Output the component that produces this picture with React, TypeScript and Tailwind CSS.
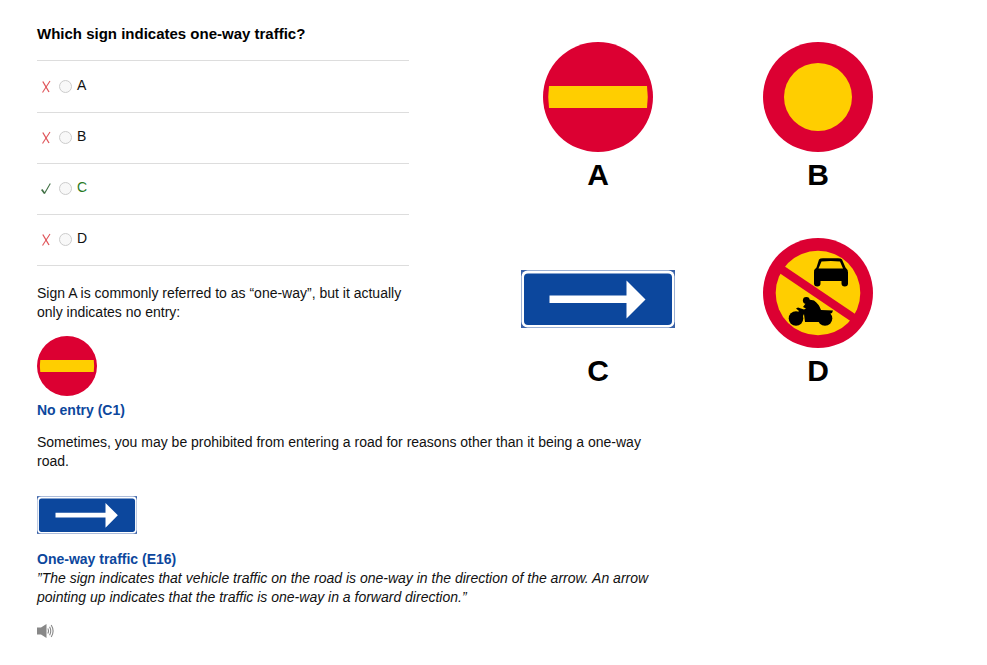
import React from "react";

type Answer = { id: string; correct: boolean };

const answers: Answer[] = [
  { id: "A", correct: false },
  { id: "B", correct: false },
  { id: "C", correct: true },
  { id: "D", correct: false },
];

function NoEntrySign({ className }: { className: string }) {
  return (
    <svg viewBox="0 0 110 110" className={className} role="img" aria-label="No entry sign">
      <circle cx="55" cy="55" r="55" fill="#dc0032" />
      <path d="M6 44H104Q105.500 55 104 66H6Q4.500 55 6 44Z" fill="#ffce00" />
    </svg>
  );
}

function ProhibitedSign() {
  return (
    <svg viewBox="0 0 110 110" className="size-[110px]" role="img" aria-label="All vehicles prohibited sign">
      <circle cx="55" cy="55" r="55" fill="#dc0032" />
      <circle cx="55" cy="55" r="34" fill="#ffce00" />
    </svg>
  );
}

function OneWaySign({ className }: { className: string }) {
  return (
    <svg viewBox="0 0 154 58" className={className} role="img" aria-label="One-way traffic sign">
      <rect width="154" height="58" fill="#3a62a8" />
      <rect x="0.500" y="0.500" width="153" height="57" rx="6" fill="#fff" />
      <rect x="3" y="3.500" width="148" height="51.500" rx="4" fill="#0c479d" />
      <path d="M28.500 25.500H105.500V10.500L124.500 29.500L105.500 48.500V33H28.500Z" fill="#fff" />
    </svg>
  );
}

function NoMotorVehiclesSign() {
  return (
    <svg viewBox="0 0 110 110" className="size-[110px]" role="img" aria-label="No motor vehicles sign">
      <circle cx="55" cy="55" r="55" fill="#dc0032" />
      <circle cx="55" cy="55" r="42.300" fill="#ffce00" />
      <path d="M15 29L95 83" stroke="#dc0032" strokeWidth="8.500" />
      <path
        fillRule="evenodd"
        d="M56 21.500Q57 20.300 60 20.300H75Q78 20.300 79 21.500L82.500 29.500Q85 31.500 85 34.500V45.500Q85 48.500 81.800 48.500T78.500 45.500V43H57.500V45.500Q57.500 48.500 54.300 48.500T51 45.500V34.500Q51 31 53.500 29.500ZM58.500 23.500L55.500 30.500H80L77 23.500Q68 22.500 58.500 23.500Z"
        fill="#000"
      />
      <circle cx="33" cy="80.500" r="7.300" fill="#000" />
      <circle cx="62" cy="80.500" r="7.300" fill="#000" />
      <circle cx="43.300" cy="62.500" r="3.400" fill="#000" />
      <path
        d="M33 70.500L35 69.500L41 71.500L43 70.500L40 69L43 65L46 61.500L51 62.500Q56 66 58 72L70 72.500L69 75L66 76L64 84H42L41 76L38 82L32 78L36 73Z"
        fill="#000"
      />
    </svg>
  );
}

function CrossMark() {
  return (
    <svg viewBox="0 0 10 13" className="h-[13px] w-[10px]" fill="none" stroke="#e0555a" role="img" aria-label="Incorrect">
      <path d="M1.800 1.500L8 12" strokeWidth="1.300" />
      <path d="M9 1L1.500 12.500" strokeWidth="1.100" />
    </svg>
  );
}

function CheckMark() {
  return (
    <svg viewBox="0 0 10 13" className="h-[13px] w-[10px]" fill="none" stroke="#3f6f43" role="img" aria-label="Correct">
      <path d="M0.700 7.500L3.700 11.500" strokeWidth="1.700" />
      <path d="M3.500 11.500L9.300 1.500" strokeWidth="1.100" />
    </svg>
  );
}

function SpeakerIcon() {
  return (
    <svg viewBox="0 0 17 14" className="h-[14px] w-[17px]" aria-hidden="true">
      <path d="M0 3.500H4L9.500 0V14L4 10.500H0Z" fill="#888" />
      <path d="M10.800 4.500Q12.200 7 10.800 9.500M12.600 2.700Q14.900 7 12.600 11.300M14.200 1Q18 7 14.200 13" stroke="#888" strokeWidth="1.100" fill="none" />
    </svg>
  );
}

function Figure({ label, children }: { label: string; children: React.ReactNode }) {
  return (
    <figure className="flex w-[220px] flex-col items-center">
      <div className="flex h-[110px] items-center">{children}</div>
      <figcaption className="mt-1 text-[30px] leading-[38px] font-bold text-black">{label}</figcaption>
    </figure>
  );
}

export default function App() {
  return (
    <main className="px-[37px] pt-6 pb-6 font-['Liberation_Sans',Arial,sans-serif] text-[14px] leading-[19px] text-[#111]">
      <div className="flex">
        <section className="w-[372px] shrink-0">
          <h1 className="mb-4 text-[15px] leading-5 font-bold text-black">Which sign indicates one-way traffic?</h1>
          <ul className="border-t border-[#ddd] pt-px">
            {answers.map(({ id, correct }) => (
              <li key={id} className="flex h-[51px] items-center border-b border-[#ddd] pb-[2px] pl-1">
                {correct ? <CheckMark /> : <CrossMark />}
                <label className={correct ? "flex items-center pl-2 text-[#2b7a1f]" : "flex items-center pl-2"}>
                  <input
                    type="radio"
                    name="answer"
                    value={id}
                    disabled
                    className="mr-[5px] size-[13px] appearance-none rounded-full border border-[#ccc] bg-[#f8f8f8]"
                  />
                  <span className="pb-[2px]">{id}</span>
                </label>
              </li>
            ))}
          </ul>
          <p className="mt-[18px]">Sign A is commonly referred to as “one-way”, but it actually only indicates no entry:</p>
          <NoEntrySign className="mt-[14px] size-[60px]" />
          <p className="mt-[5px] font-bold text-[#0c479d]">No entry (C1)</p>
        </section>
        <div className="ml-[79px] grid shrink-0 grid-cols-2 content-start gap-y-11 pt-[18px]">
          <Figure label="A">
            <NoEntrySign className="size-[110px]" />
          </Figure>
          <Figure label="B">
            <ProhibitedSign />
          </Figure>
          <Figure label="C">
            <OneWaySign className="mt-[12px] h-[58px] w-[154px]" />
          </Figure>
          <Figure label="D">
            <NoMotorVehiclesSign />
          </Figure>
        </div>
      </div>
      <section className="mt-[13px] max-w-[620px]">
        <p>Sometimes, you may be prohibited from entering a road for reasons other than it being a one-way road.</p>
        <OneWaySign className="mt-[25px] h-[38px] w-[100px]" />
        <h2 className="mt-4 font-bold text-[#0c479d]">One-way traffic (E16)</h2>
        <p className="italic">
          ”The sign indicates that vehicle traffic on the road is one-way in the direction of the arrow. An arrow pointing up indicates that the traffic is one-way in a forward direction.”
        </p>
        <button type="button" aria-label="Listen" className="mt-[17px] block">
          <SpeakerIcon />
        </button>
      </section>
    </main>
  );
}
